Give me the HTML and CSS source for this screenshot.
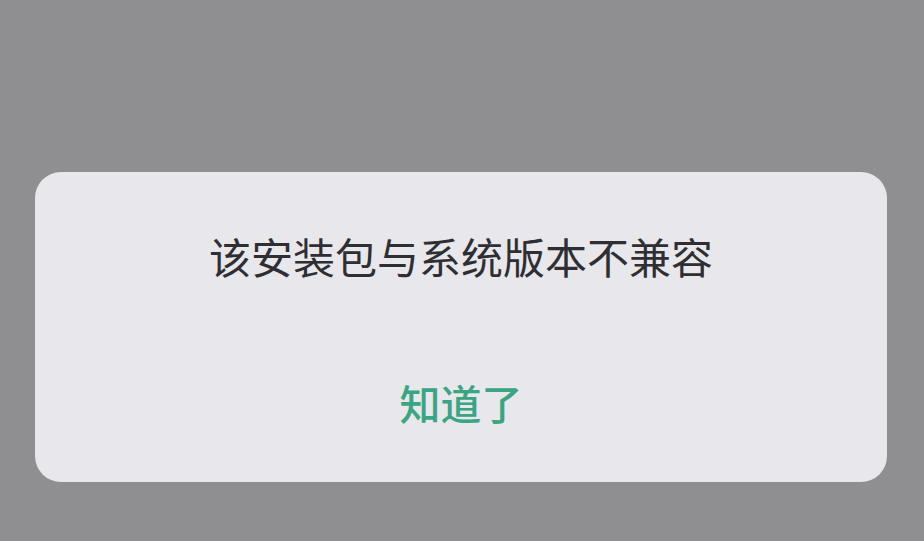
FILE: index.html
```html
<!DOCTYPE html>
<html lang="zh-CN">
<head>
<meta charset="utf-8">
<link rel="stylesheet" href="styles.css">
</head>
<body>
<div class="screen">
  <div class="dialog">
    <div class="title">该安装包与系统版本不兼容</div>
    <div class="button">知道了</div>
  </div>
</div>
</body>
</html>
```
FILE: styles.css
```css
html, body {
  margin: 0;
  padding: 0;
  background: #8f8e91;
}
.screen {
  width: 924px;
  height: 541px;
  padding-top: 172px;
  padding-left: 35px;
  box-sizing: border-box;
  font-family: "Noto Sans CJK SC", "Noto Sans", sans-serif;
}
.dialog {
  width: 852px;
  height: 310px;
  box-sizing: border-box;
  background: #e8e7eb;
  border-radius: 26px;
  padding-top: 59px;
  display: flex;
  flex-direction: column;
  align-items: center;
}
.title {
  font-size: 42px;
  line-height: 50px;
  color: #2f2e32;
  font-weight: 400;
}
.button {
  margin-top: 96px;
  font-size: 41px;
  line-height: 50px;
  color: #3aa582;
  font-weight: 500;
}
```
